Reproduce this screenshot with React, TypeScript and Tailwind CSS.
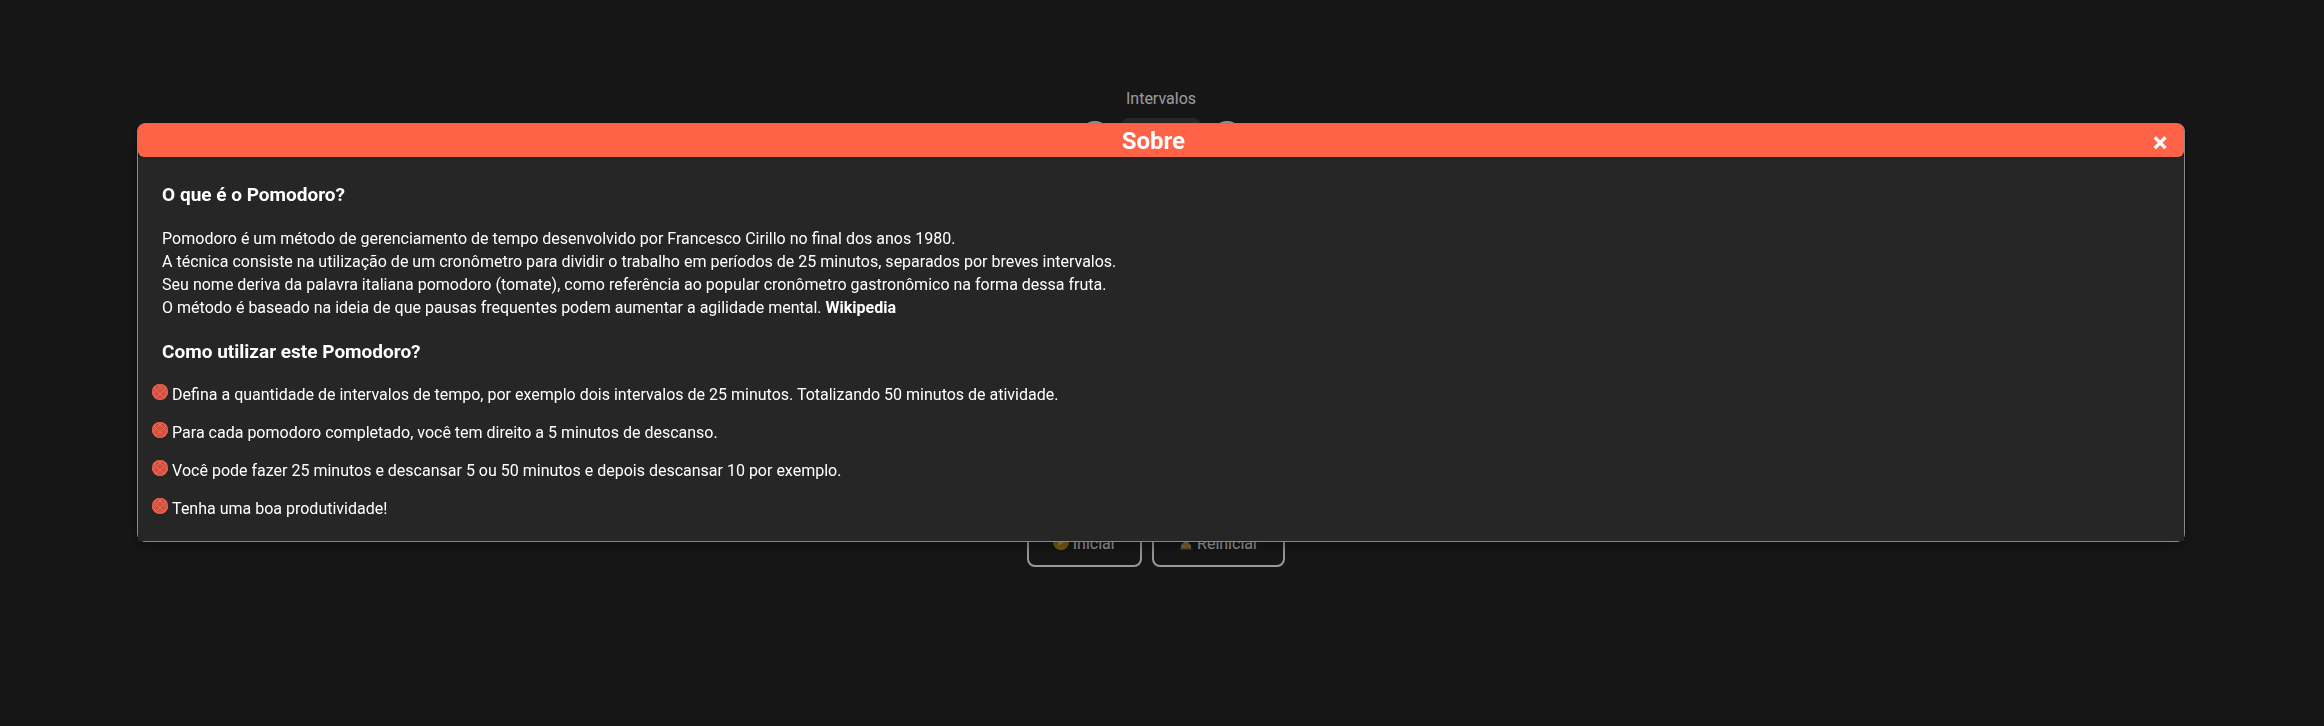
import { useId, useState } from "react";

const steps = [
  "Defina a quantidade de intervalos de tempo, por exemplo dois intervalos de 25 minutos. Totalizando 50 minutos de atividade.",
  "Para cada pomodoro completado, você tem direito a 5 minutos de descanso.",
  "Você pode fazer 25 minutos e descansar 5 ou 50 minutos e depois descansar 10 por exemplo.",
  "Tenha uma boa produtividade!",
];

function Bullet() {
  const clip = useId();
  return (
    <svg viewBox="0 0 16 16" className="mt-px h-4 w-4 shrink-0" aria-hidden="true">
      <clipPath id={clip}>
        <circle cx="8" cy="8" r="8" />
      </clipPath>
      <g clipPath={`url(#${clip})`}>
        <rect width="16" height="16" fill="#d4503e" />
        <path
          d="M-2 7 7-2M-2 13 13-2M1 17 17 1M7 18 18 7M9-2l9 9M3-2l15 15M-1 1l16 16M-2 7l11 11"
          stroke="#e8695a"
          strokeWidth="1"
        />
        <circle cx="8" cy="8" r="7.400" fill="none" stroke="#e2614f" strokeWidth="1.200" />
      </g>
    </svg>
  );
}

function PlayIcon() {
  return (
    <svg viewBox="0 0 16 16" className="mb-1 h-4 w-4" aria-hidden="true">
      <circle cx="8" cy="8" r="8" fill="#d09a10" />
      <path d="M5.5 3.400 12.800 7.600l-7.300 4.200z" fill="#e8e0c8" />
    </svg>
  );
}

function HourglassIcon() {
  return (
    <svg viewBox="0 0 14 16" className="mb-1 h-4 w-3.5" aria-hidden="true">
      <path d="M2 1h10v3c0 2-3 3-3 4s3 2 3 4v3H2v-3c0-2 3-3 3-4S2 6 2 4z" fill="#b9b4a0" />
      <path d="M3 14.500c0-3 2.500-3.500 4-5.500 1.500 2 4 2.500 4 5.500z" fill="#d9a83a" />
      <path d="M0.500 0h13v1.500h-13zM0.500 14.500h13V16h-13z" fill="#7a4230" />
    </svg>
  );
}

const roundButton = "h-8 w-8 rounded-full border-2 border-white bg-[#262626]";
const actionButton =
  "mr-2.5 flex h-[47px] items-center justify-center gap-1 rounded-lg border-2 border-white px-6 text-base";

export default function App() {
  const [open, setOpen] = useState(true);
  const [count, setCount] = useState(1);

  return (
    <div className="min-h-screen bg-[#262626] font-[Roboto,sans-serif] text-base text-white">
      <main className="flex flex-col items-center pr-0.5 pt-[87px]">
        <label htmlFor="intervalos" className="leading-6">
          Intervalos
        </label>
        <div className="mt-[7px] flex items-center gap-2.5">
          <button type="button" className={roundButton} onClick={() => setCount(Math.max(1, count - 1))}>
            -
          </button>
          <input
            id="intervalos"
            className="h-[38px] w-20 rounded-lg bg-[#454545] text-center"
            value={count}
            readOnly
          />
          <button type="button" className={roundButton} onClick={() => setCount(count + 1)}>
            +
          </button>
        </div>
        <div className="mt-[364px] flex">
          <button type="button" className={actionButton}>
            <PlayIcon />
            Iniciar
          </button>
          <button type="button" className={`${actionButton} min-w-[133px]`}>
            <HourglassIcon />
            Reiniciar
          </button>
        </div>
      </main>

      {open && (
        <div className="fixed inset-0 bg-black/40 pl-[5.9%] pr-[6%] pt-[123px]">
          <section
            role="dialog"
            aria-labelledby="sobre"
            className="rounded-lg border border-[#888888] shadow-[0_4px_8px_0_rgba(0,0,0,0.2),0_6px_20px_0_rgba(0,0,0,0.19)]"
          >
            <header className="flex items-center rounded-md bg-[#ff6347] px-4">
              <h2 id="sobre" className="flex-1 text-center text-2xl font-bold leading-8">
                Sobre
              </h2>
              <button type="button" className="pt-1 text-[28px] font-bold leading-[29px]" onClick={() => setOpen(false)}>
                ×
              </button>
            </header>
            <div className="bg-[#262626] px-3.5 pb-[21px] pt-[27px]">
              <div className="px-2.5">
                <h3 className="text-[19px] font-bold leading-[22px]">O que é o Pomodoro?</h3>
                <p className="mb-[22px] mt-[21px] leading-[23px]">
                  Pomodoro é um método de gerenciamento de tempo desenvolvido por Francesco Cirillo no final dos anos
                  1980.
                  <br />
                  A técnica consiste na utilização de um cronômetro para dividir o trabalho em períodos de 25 minutos,
                  separados por breves intervalos.
                  <br />
                  Seu nome deriva da palavra italiana pomodoro (tomate), como referência ao popular cronômetro
                  gastronômico na forma dessa fruta.
                  <br />
                  O método é baseado na ideia de que pausas frequentes podem aumentar a agilidade mental.{" "}
                  <a href="https://pt.wikipedia.org/wiki/T%C3%A9cnica_pomodoro" className="font-bold">
                    Wikipedia
                  </a>
                </p>
                <h3 className="text-[19px] font-bold leading-[22px]">Como utilizar este Pomodoro?</h3>
              </div>
              <ul className="mt-5 flex flex-col gap-[15px]">
                {steps.map((step) => (
                  <li key={step} className="flex items-start gap-1 leading-[23px]">
                    <Bullet />
                    {step}
                  </li>
                ))}
              </ul>
            </div>
          </section>
        </div>
      )}
    </div>
  );
}
